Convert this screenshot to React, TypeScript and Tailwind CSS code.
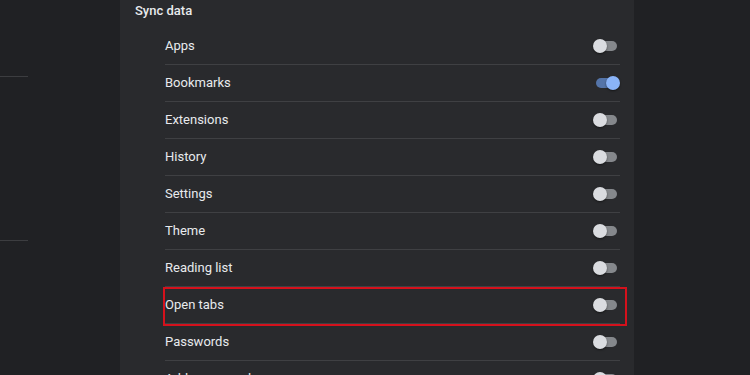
const rows: { label: string; on?: boolean; highlight?: boolean }[] = [
  { label: 'Apps' },
  { label: 'Bookmarks', on: true },
  { label: 'Extensions' },
  { label: 'History' },
  { label: 'Settings' },
  { label: 'Theme' },
  { label: 'Reading list' },
  { label: 'Open tabs', highlight: true },
  { label: 'Passwords' },
  { label: 'Addresses and more' },
]

const Toggle = ({ on = false }: { on?: boolean }) => (
  <div className="relative w-[27px] h-[14px] flex items-center">
    <div className={`ml-[3px] w-[21px] h-[10px] rounded-full ${on ? 'bg-[#5474a8]' : 'bg-[#85888c]'}`} />
    <div
      className={`absolute top-0 w-[14px] h-[14px] rounded-full shadow-[0_1px_2px_rgba(0,0,0,0.5)] ${
        on ? 'right-0 bg-[#8ab4f8]' : 'left-0 bg-[#dadce0]'
      }`}
    />
  </div>
)

export default function App() {
  return (
    <div className="w-[750px] h-[375px] overflow-hidden flex bg-[#202124] font-['Roboto',sans-serif] text-[13px] text-[#e8eaed]">
      {/* Left nav remnants */}
      <div className="w-[120px] shrink-0">
        <div className="mt-[76px] h-px w-[28px] bg-[#3c3d40]" />
        <div className="mt-[163px] h-px w-[28px] bg-[#3c3d40]" />
      </div>

      {/* Settings card */}
      <div className="w-[514px] shrink-0 bg-[#292a2d] pr-[14px]">
        <div className="pl-[15px] pt-px h-[27px] leading-[20px] font-medium">Sync data</div>
        <div className="pl-[45px]">
          {rows.map((r, i) => (
            <div
              key={r.label}
              className={`relative h-[37px] flex items-center justify-between ${
                i > 0 ? 'border-t border-[#3f4043]' : 'h-[36px]'
              }`}
            >
              <span>{r.label}</span>
              <Toggle on={r.on} />
              {r.highlight && (
                <div className="absolute left-[-2px] right-[-7px] top-[0px] bottom-[-3px] border-[2px] border-[#d4111c]" />
              )}
            </div>
          ))}
        </div>
      </div>

      <div className="flex-1" />
    </div>
  )
}
